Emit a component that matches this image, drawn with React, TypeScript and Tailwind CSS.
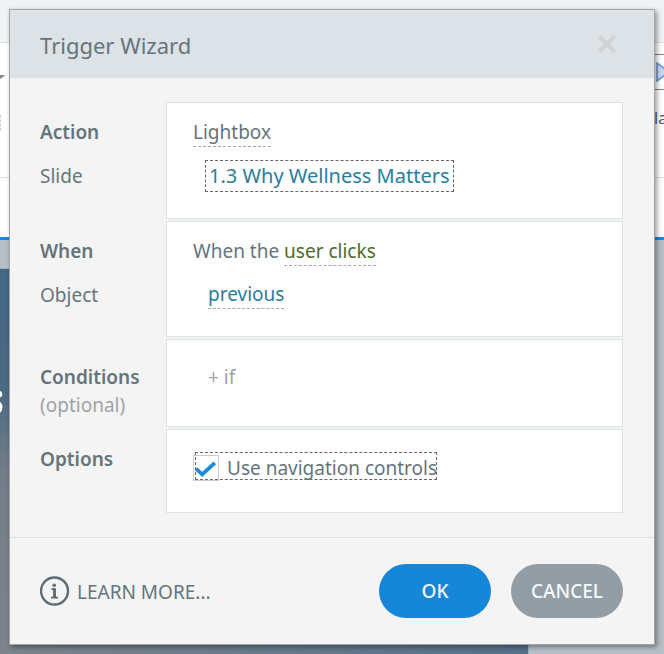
import React from 'react';

interface RowProps {
  title: string;
  subtitle?: string;
  tight?: boolean;
  className: string;
  children: React.ReactNode;
}

const WizardRow: React.FC<RowProps> = ({ title, subtitle, tight, className, children }) => (
  <section className="grid grid-cols-[126px_1fr]">
    <div className={`flex flex-col ${tight ? 'gap-1 pt-[26px]' : 'gap-5 pt-[18px]'}`}>
      <h2 className="font-semibold">{title}</h2>
      {subtitle && <p className={tight ? 'text-[#a0a3a5]' : ''}>{subtitle}</p>}
    </div>
    <div className={`flex flex-col items-start border border-[#dde4e8] bg-white pl-[26px] ${className}`}>
      {children}
    </div>
  </section>
);

const InfoIcon = () => (
  <svg viewBox="0 0 30 30" className="h-[30px] w-[30px]" fill="none" stroke="#5c6d75" aria-hidden="true">
    <circle cx="14.5" cy="15" r="13.5" strokeWidth="2.4" />
    <circle cx="14.2" cy="9.2" r="1.8" fill="#5c6d75" stroke="none" />
    <path d="M11.4 13.2H14.7V21.5M11 21.6H18" strokeWidth="1.7" />
    <path d="M14.5 12.4V21.5" strokeWidth="2.8" />
  </svg>
);

// The editor window that stays visible around the dialog
const EditorBackdrop = () => (
  <div className="absolute inset-0 flex flex-col overflow-hidden bg-[#b7bfc7]" aria-hidden="true">
    <div className="h-[43px] shrink-0 border-b border-[#d8e0e5] bg-[#eff3f6]" />
    <div className="flex h-[135px] shrink-0 justify-between border-b border-[#d8e0e5] bg-white">
      <div className="flex flex-col items-start pt-8">
        <svg viewBox="0 0 6 4" className="h-1 w-[6px]">
          <path d="M-4 0H5.5L0.8 4Z" fill="#8b8b8b" />
        </svg>
        <div className="mt-9 h-4 border-l border-dashed border-[#cfcfcf]" />
      </div>
      <div className="flex w-[10px] flex-col overflow-hidden pt-[11px]">
        <div className="h-9 border-y border-[#7b8389] pt-[7px]">
          <svg viewBox="0 0 10 20" className="h-5 w-[10px]">
            <path d="M3 1L15 10L3 19Z" fill="#c3d6f3" stroke="#6d8fc0" strokeWidth="1.5" />
          </svg>
        </div>
        <span className="mt-4 text-base leading-6 text-[#4e5d66]">la</span>
      </div>
    </div>
    <div className="h-[62px] shrink-0 border-b-[3px] border-[#1c87d6] bg-white" />
    <div className="mt-7 mr-[135px] flex-1 border-t border-r border-[#8fb4cf] bg-[linear-gradient(178deg,#436785_0%,#4b6a84_30%,#747d88_50%,#7e848d_100%)]">
      <div className="h-full bg-[linear-gradient(90deg,transparent_0%,#55718a_100%)] pt-[99px]">
        <div className="flex w-1 justify-end overflow-hidden font-serif text-[52px] leading-[60px] font-bold text-white">
          s
        </div>
      </div>
    </div>
  </div>
);

export default function App() {
  return (
    <div className="relative min-h-screen px-[9px] pt-[9px] pb-[10px] font-['Noto_Sans','Open_Sans',sans-serif] text-[19px] leading-6 text-[#65747b]">
      <EditorBackdrop />

      <main
        role="dialog"
        aria-labelledby="wizard-title"
        className="relative border border-[#a3a5a7] bg-[#f4f4f4] shadow-[2px_2px_5px_rgba(0,0,0,0.4)]"
      >
        <header className="flex h-[68px] items-center justify-between bg-[#dde2e6] pr-[37px] pl-[30px]">
          <h1 id="wizard-title" className="pt-[2px] text-[22px] leading-8">
            Trigger Wizard
          </h1>
          <button type="button" aria-label="Close">
            <svg viewBox="0 0 20 20" className="h-5 w-5" stroke="#d2d3d4" strokeWidth="4.2">
              <path d="M2.5 2.5L17.5 17.5M17.5 2.5L2.5 17.5" />
            </svg>
          </button>
        </header>

        <div className="flex flex-col gap-[2px] border-b border-[#dae2e8] pt-6 pr-[31px] pb-6 pl-[30px]">
          <WizardRow title="Action" subtitle="Slide" className="min-h-[117px] gap-[13px] pt-[17px]">
            <button type="button" className="border-b border-dashed border-[#a8a8a8] pb-[2px]">
              Lightbox
            </button>
            <button
              type="button"
              className="ml-3 h-8 border border-dashed border-[#666] px-[3px] text-xl text-[#2b7d9e]"
            >
              1.3 Why Wellness Matters
            </button>
          </WizardRow>

          <WizardRow title="When" subtitle="Object" className="min-h-[116px] gap-4 pt-[17px]">
            <p>
              When the{' '}
              <button type="button" className="border-b border-dashed border-[#a8a8a8] pb-[2px] text-[#4c6b2a]">
                user clicks
              </button>
            </p>
            <button
              type="button"
              className="ml-[15px] border-b border-dashed border-[#a8a8a8] pb-[2px] text-[#2b7d9e]"
            >
              previous
            </button>
          </WizardRow>

          <WizardRow title="Conditions" subtitle="(optional)" tight className="min-h-[88px] pt-[25px]">
            <button type="button" className="ml-[15px] text-[#a0a3a5]">
              + if
            </button>
          </WizardRow>

          <WizardRow title="Options" className="min-h-[84px] pt-[25px]">
            <label className="relative flex items-center gap-2">
              <span className="grid">
                <input
                  type="checkbox"
                  defaultChecked
                  className="peer col-start-1 row-start-1 h-[26px] w-[26px] appearance-none border border-[#c5cfd5] bg-white"
                />
                <svg
                  viewBox="0 0 26 26"
                  className="pointer-events-none invisible col-start-1 row-start-1 h-[26px] w-[26px] peer-checked:visible"
                  fill="none"
                  stroke="#1c8ad9"
                  strokeWidth="3.8"
                >
                  <path d="M3 13.5L9.2 19.5L21.8 7.8" />
                </svg>
              </span>
              Use navigation controls
              <span className="pointer-events-none absolute -top-[3px] right-0 bottom-px left-[2px] border border-dashed border-[#666]" />
            </label>
          </WizardRow>
        </div>

        <footer className="flex items-center justify-between py-[26px] pr-[31px] pl-[30px]">
          <a href="#learn-more" className="flex items-center gap-[7px]">
            <InfoIcon />
            <span className="pt-[2px]">LEARN MORE...</span>
          </a>
          <div className="flex gap-5 font-medium text-[#f4f8fb]">
            <button type="button" className="h-[54px] w-28 rounded-full bg-[#1686d8]">
              OK
            </button>
            <button type="button" className="h-[54px] w-28 rounded-full bg-[#939da5]">
              CANCEL
            </button>
          </div>
        </footer>
      </main>
    </div>
  );
}
